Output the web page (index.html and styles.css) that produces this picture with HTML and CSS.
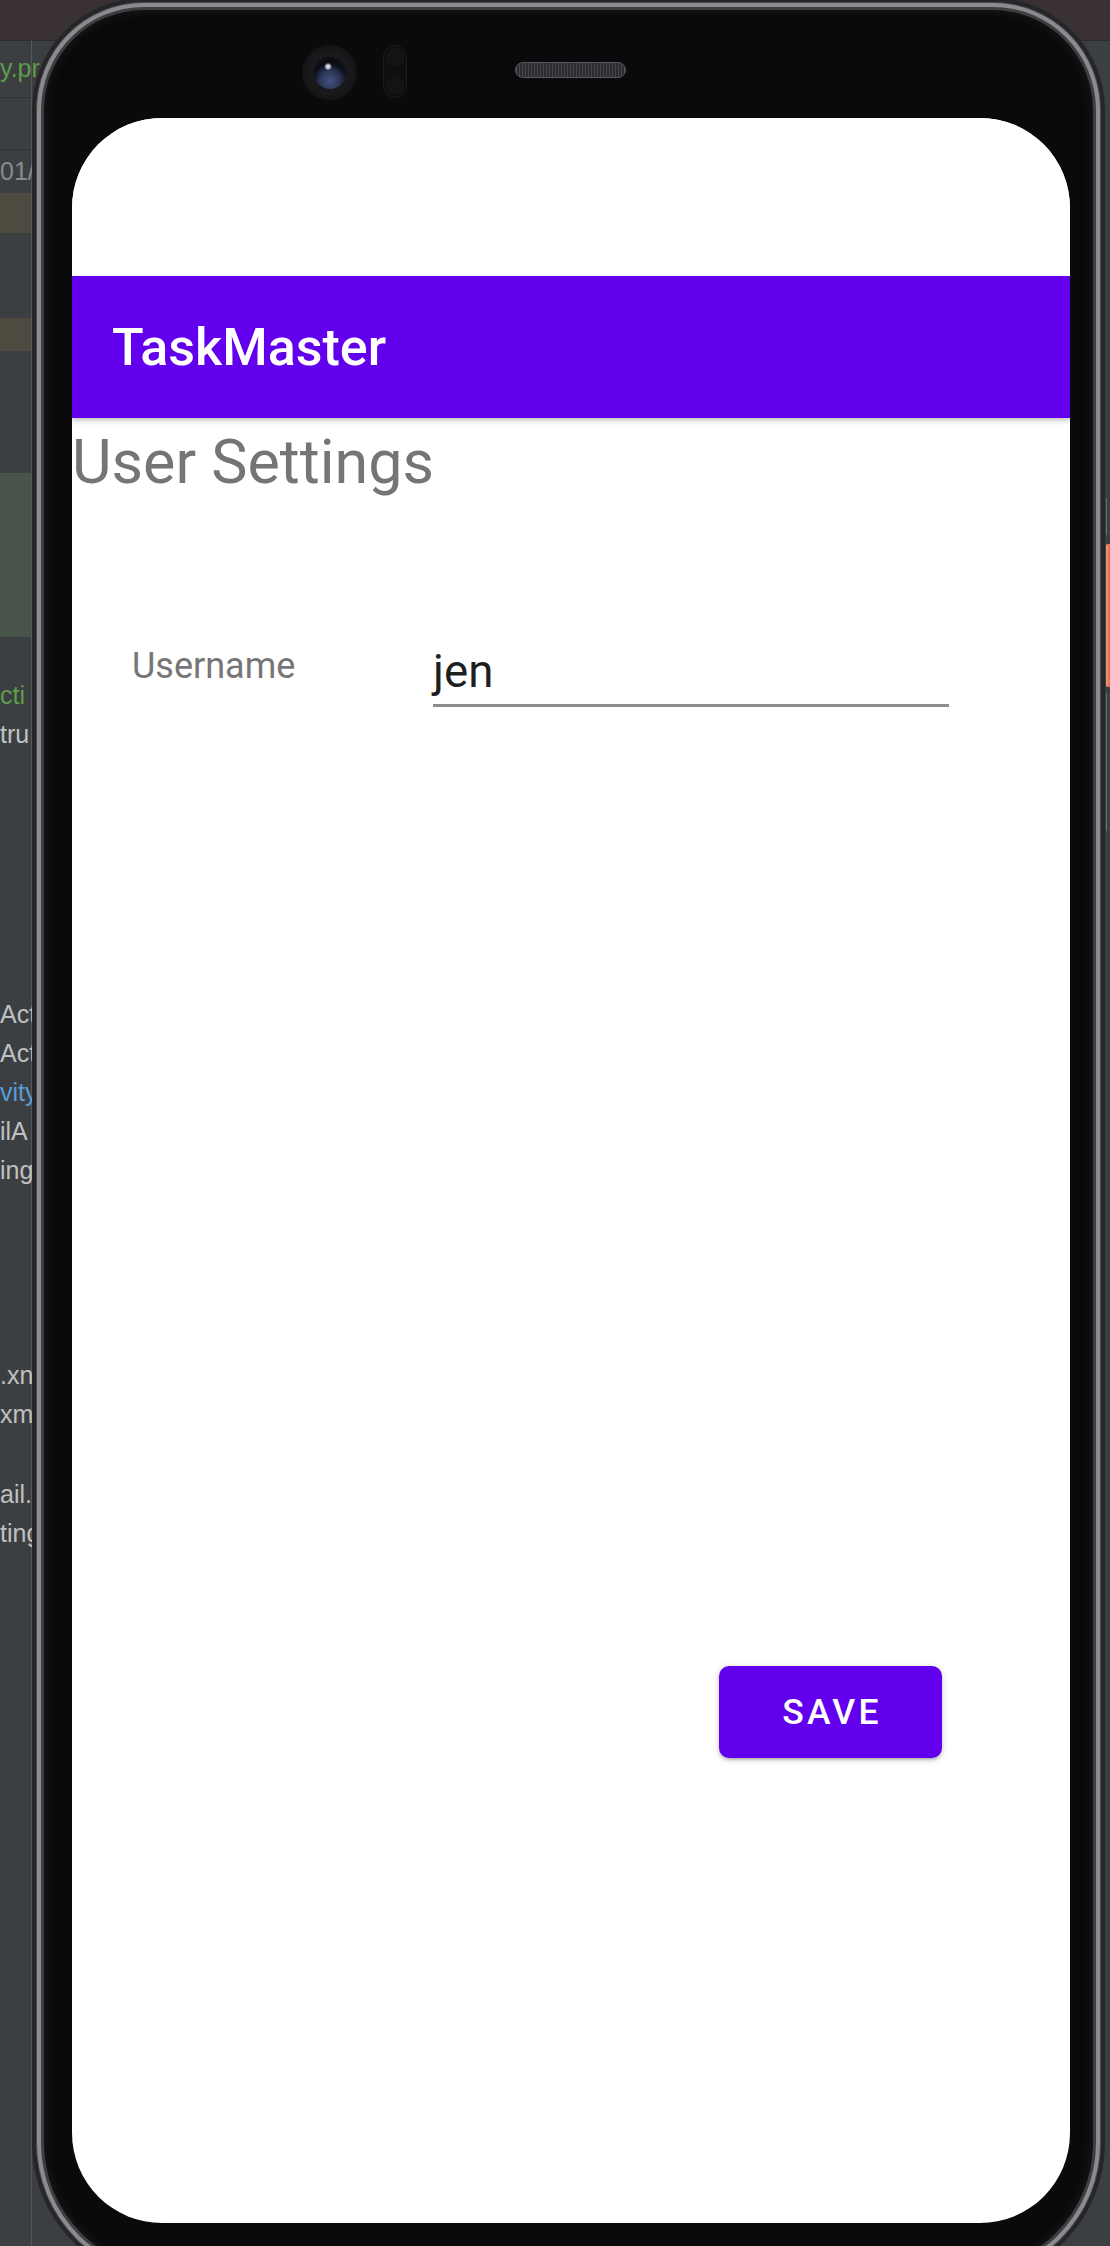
FILE: index.html
```html
<!DOCTYPE html>
<html lang="en">
<head>
<meta charset="utf-8">
<title>TaskMaster - User Settings</title>
<link rel="stylesheet" href="styles.css">
</head>
<body>
<div class="desktop">
  <aside class="ide-left">
    <div class="tree">
      <div class="row r1"><span class="t green">y.pr</span></div>
      <div class="row r2"></div>
      <div class="row r3"><span class="t dim">01/</span></div>
      <div class="row r4 tan"></div>
      <div class="row r5"></div>
      <div class="row r6 tan"></div>
      <div class="row r7"></div>
      <div class="row r8 greenband"></div>
      <div class="row gap39"></div>
      <div class="row line"><span class="t green">cti</span></div>
      <div class="row line"><span class="t">tru</span></div>
      <div class="row gap241"></div>
      <div class="row line"><span class="t">Act</span></div>
      <div class="row line"><span class="t">Act</span></div>
      <div class="row line"><span class="t blue">vity</span></div>
      <div class="row line"><span class="t">ilA</span></div>
      <div class="row line"><span class="t">ing</span></div>
      <div class="row gap166"></div>
      <div class="row line"><span class="t">.xn</span></div>
      <div class="row line"><span class="t">xm</span></div>
      <div class="row gap41"></div>
      <div class="row line"><span class="t">ail.:</span></div>
      <div class="row line"><span class="t">ting</span></div>
    </div>
  </aside>

  <div class="phone">
    <div class="bezel-top">
      <div class="camera"><div class="lens"></div></div>
      <div class="sensor"><div class="dot"></div><div class="dot"></div></div>
      <div class="speaker"></div>
    </div>
    <main class="screen">
      <div class="statusbar"></div>
      <header class="appbar"><h1 class="app-title">TaskMaster</h1></header>
      <h2 class="page-title">User Settings</h2>
      <div class="field-row">
        <label class="field-label" for="username">Username</label>
        <div class="field-input" id="username">jen</div>
      </div>
      <div class="actions">
        <button class="save-btn" type="button">SAVE</button>
      </div>
    </main>
  </div>

  <aside class="ide-right">
    <div class="rline l1"></div>
    <div class="marker"></div>
    <div class="rline l2"></div>
  </aside>
</div>
</body>
</html>
```

FILE: styles.css
```css
html, body {
  margin: 0;
  padding: 0;
}

body {
  width: 1110px;
  height: 2246px;
  overflow: hidden;
  background: linear-gradient(to bottom, #3a3135 0, #3a3135 40px, #2b2b2d 40px, #2b2b2d 41px, #3c3f41 41px);
  font-family: Roboto, "Liberation Sans", sans-serif;
}

.desktop {
  display: flex;
  height: 2246px;
  overflow: hidden;
}

/* ---------- IDE strip on the left ---------- */
.ide-left {
  flex: none;
  width: 32px;
  padding-top: 40px;
  box-sizing: border-box;
}

.tree {
  width: 31px;
  border-right: 1px solid #55585a;
  min-height: 2206px;
  display: flex;
  flex-direction: column;
}

.row {
  flex: none;
  display: flex;
  align-items: center;
  white-space: nowrap;
}

.r1 { height: 57px; border-bottom: 1px solid #313335; }
.r2 { height: 51px; border-bottom: 1px solid #313335; }
.r3 { height: 43px; }
.r4 { height: 40px; }
.r5 { height: 85px; }
.r6 { height: 33px; }
.r7 { height: 122px; }
.r8 { height: 164px; }
.gap39 { height: 39px; }
.gap241 { height: 241px; }
.gap166 { height: 166px; }
.gap41 { height: 41px; }
.line { height: 39px; }

.tan { background: #4d4a3f; width: 31px; }
.greenband { background: #48544a; width: 31px; }

.t {
  font-family: "Liberation Sans", "DejaVu Sans", sans-serif;
  font-size: 25px;
  color: #c0c0c0;
  line-height: 1;
}
.t.green { color: #5f9c4c; }
.t.blue { color: #5b9bd5; }
.t.dim { color: #8a8a8a; }

/* ---------- Phone ---------- */
.phone {
  flex: none;
  width: 1073px;
  height: 2285px;
  margin-top: -2px;
  box-sizing: border-box;
  border: 4px solid #262628;
  border-radius: 112px 112px 140px 140px;
  background: #0a0a0c;
  box-shadow:
    inset 0 0 0 1px #4a4a4d,
    inset 0 0 0 5px #8b8b8f,
    inset 0 0 0 8px #3e3e41,
    inset 0 0 6px 12px #131315;
  padding: 0 31px 56px 36px;
  display: flex;
  flex-direction: column;
}

.bezel-top {
  flex: none;
  height: 116px;
  box-sizing: border-box;
  padding: 43px 0 0 230px;
  display: flex;
  align-items: flex-start;
}

.camera {
  width: 55px;
  height: 55px;
  border-radius: 50%;
  background: radial-gradient(circle at 50% 50%, #1c1c1f 0, #19191c 55%, #121214 75%, #0d0d0f 100%);
  display: flex;
  align-items: center;
  justify-content: center;
}

.lens {
  width: 32px;
  height: 32px;
  border-radius: 50%;
  background:
    radial-gradient(circle at 44% 30%, #e8e8f0 0, #d0d4e6 1.5px, rgba(80, 90, 130, 0) 4px),
    radial-gradient(circle at 50% 75%, #44527e 0, #2c3656 35%, rgba(20, 22, 34, 0) 60%),
    radial-gradient(circle at 50% 50%, #0c0d14 0, #0c0d14 60%, #1b1c24 100%);
}

.sensor {
  margin-left: 26px;
  width: 24px;
  height: 53px;
  box-sizing: border-box;
  border-radius: 12px;
  border: 1px solid #1c1c1f;
  background: #0f0f12;
  display: flex;
  flex-direction: column;
  align-items: center;
  justify-content: space-between;
  padding: 4px 0;
}

.sensor .dot {
  width: 15px;
  height: 15px;
  border-radius: 50%;
  background: #131316;
  box-shadow: 0 0 0 1px #19191c;
}

.speaker {
  margin-left: 108px;
  margin-top: 17px;
  width: 111px;
  height: 16px;
  box-sizing: border-box;
  border-radius: 8px;
  border: 1px solid #55555a;
  background:
    repeating-linear-gradient(90deg, #48484c 0, #48484c 1px, #2c2c2f 1px, #2c2c2f 3px),
    #333336;
}

/* ---------- Screen ---------- */
.screen {
  flex: none;
  height: 2105px;
  background: #ffffff;
  border-radius: 90px;
  overflow: hidden;
  display: flex;
  flex-direction: column;
}

.statusbar {
  flex: none;
  height: 158px;
  background: #ffffff;
}

.appbar {
  flex: none;
  height: 142px;
  background: #6200ee;
  display: flex;
  align-items: center;
  padding-left: 40px;
  box-shadow: 0 2px 4px rgba(0, 0, 0, 0.18), 0 4px 6px rgba(0, 0, 0, 0.08);
  position: relative;
  z-index: 1;
}

.app-title {
  margin: 2px 0 0 0;
  font-family: Roboto, "Liberation Sans", sans-serif;
  font-weight: 500;
  font-size: 52px;
  color: #ffffff;
  line-height: 1.172;
}

.page-title {
  margin: 8px 0 0 0;
  font-family: Roboto, "Liberation Sans", sans-serif;
  font-weight: 400;
  font-size: 61px;
  line-height: normal;
  color: #757575;
}

.field-row {
  display: flex;
  align-items: flex-start;
  margin-top: 147px;
  padding-left: 60px;
}

.field-label {
  width: 301px;
  flex: none;
  font-family: Roboto, "Liberation Sans", sans-serif;
  font-size: 36px;
  line-height: normal;
  color: #767676;
}

.field-input {
  width: 516px;
  flex: none;
  box-sizing: border-box;
  font-family: Roboto, "Liberation Sans", sans-serif;
  font-size: 45.7px;
  line-height: normal;
  color: #1f1f1f;
  padding-bottom: 6px;
  border-bottom: 3px solid #8d8d8d;
}

.actions {
  display: flex;
  justify-content: flex-end;
  margin-top: 959px;
  padding-right: 128px;
}

.save-btn {
  width: 223px;
  height: 92px;
  border: none;
  border-radius: 10px;
  background: #6200ee;
  color: #ffffff;
  font-family: Roboto, "Liberation Sans", sans-serif;
  font-weight: 500;
  font-size: 35.5px;
  letter-spacing: 3.2px;
  padding: 0 0 0 3px;
  box-shadow: 0 3px 3px -2px rgba(0, 0, 0, 0.2), 0 2px 4px rgba(0, 0, 0, 0.14), 0 1px 8px rgba(0, 0, 0, 0.12);
}

/* ---------- IDE strip on the right ---------- */
.ide-right {
  flex: 1;
  padding-top: 498px;
  display: flex;
  flex-direction: column;
  align-items: flex-start;
}

.rline {
  width: 1px;
  margin-left: 1px;
  background: #6a6d70;
}
.rline.l1 { height: 37px; margin-bottom: 9px; }
.rline.l2 { height: 138px; margin-top: 6px; }

.marker {
  width: 4px;
  height: 143px;
  margin-left: 1px;
  border-radius: 2px 0 0 2px;
  background: linear-gradient(to right, #f39a80, #d9694f);
}
```
